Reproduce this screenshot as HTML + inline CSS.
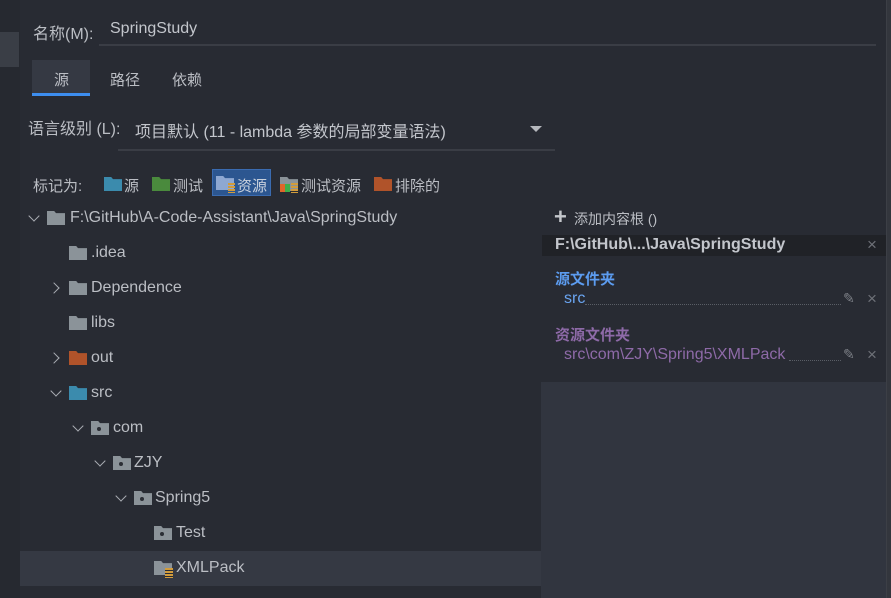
<!DOCTYPE html>
<html><head><meta charset="utf-8"><style>
body{margin:0;width:891px;height:598px;background:#282b33;overflow:hidden;position:relative;font-family:"Liberation Sans","Noto Sans CJK SC",sans-serif;font-size:16px;color:#bbbec4}
.a{position:absolute;white-space:nowrap}
.c{font-size:15px}
.f{position:absolute;width:18px;height:14px}
.chev{position:absolute;width:7px;height:7px;border-right:1.6px solid #a9adb3;border-bottom:1.6px solid #a9adb3}
.down{transform:rotate(45deg)}
.right{transform:rotate(-45deg)}
.x{position:absolute;color:#6e7178;font-size:17px}
</style></head><body>
<div class="a" style="left:0;top:0;width:20px;height:598px;background:#262930"></div>
<div class="a" style="left:0;top:32px;width:19px;height:35px;background:#3a3e46"></div>
<div class="a" style="left:886px;top:0;width:5px;height:598px;background:#33363d;border-left:1px solid #3c3f46"></div>

<div class="a" style="left:33px;top:20px">名称(M):</div>
<div class="a" style="left:110px;top:20px;color:#c3c6cc">SpringStudy</div>
<div class="a" style="left:99px;top:44px;width:777px;height:2px;background:#3a3d45"></div>

<div class="a" style="left:32px;top:60px;width:58px;height:33px;background:#353943"></div>
<div class="a" style="left:32px;top:93px;width:58px;height:3px;background:#3d8ef0"></div>
<div class="a c" style="left:54px;top:69px">源</div>
<div class="a c" style="left:110px;top:69px">路径</div>
<div class="a c" style="left:172px;top:69px">依赖</div>

<div class="a" style="left:28px;top:115px">语言级别 (L):</div>
<div class="a" style="left:135px;top:118px;color:#c3c6cc">项目默认 (11 - lambda 参数的局部变量语法)</div>
<div class="a" style="left:530px;top:126px;width:0;height:0;border-left:6px solid transparent;border-right:6px solid transparent;border-top:6px solid #b5b8bd"></div>
<div class="a" style="left:118px;top:149px;width:437px;height:2px;background:#3a3d45"></div>

<div class="a c" style="left:33px;top:175px">标记为:</div>
<div class="f" style="left:104px;top:177px;background:#3b8bad;clip-path:polygon(0 0,40% 0,50% 15%,100% 15%,100% 100%,0 100%)"></div>
<div class="a c" style="left:124px;top:175px">源</div>
<div class="f" style="left:152px;top:177px;background:#4a8a3d;clip-path:polygon(0 0,40% 0,50% 15%,100% 15%,100% 100%,0 100%)"></div>
<div class="a c" style="left:173px;top:175px">测试</div>
<div class="a" style="left:212px;top:169px;width:59px;height:27px;background:#2c5690;border:1px solid #3a6bb0;box-sizing:border-box"></div>
<div class="f" style="left:216px;top:176px;background:#8ea8d2;clip-path:polygon(0 0,40% 0,50% 15%,100% 15%,100% 100%,0 100%)"></div>
<div class="a" style="left:228px;top:183px;width:7px;height:10px;background:repeating-linear-gradient(#d29c3c 0 2px,transparent 2px 3px)"></div>
<div class="a c" style="left:237px;top:175px;color:#c8d0dc">资源</div>
<div class="f" style="left:280px;top:177px;background:#8b9399;clip-path:polygon(0 0,40% 0,50% 15%,100% 15%,100% 100%,0 100%)"></div>
<div class="a" style="left:280px;top:184px;width:10px;height:8px;background:linear-gradient(90deg,#e0662a 50%,#3fae4a 50%)"></div>
<div class="a" style="left:291px;top:183px;width:7px;height:10px;background:repeating-linear-gradient(#d29c3c 0 2px,transparent 2px 3px)"></div>
<div class="a c" style="left:301px;top:175px">测试资源</div>
<div class="f" style="left:374px;top:177px;background:#b0532a;clip-path:polygon(0 0,40% 0,50% 15%,100% 15%,100% 100%,0 100%)"></div>
<div class="a c" style="left:395px;top:175px">排除的</div>

<!-- tree -->
<div class="a" style="left:20px;top:551px;width:521px;height:35px;background:#353943"></div>
<div class="chev down" style="left:30px;top:212px"></div>
<div class="f" style="left:47px;top:211px;background:#8b9399;clip-path:polygon(0 0,40% 0,50% 15%,100% 15%,100% 100%,0 100%)"></div>
<div class="a" style="left:70px;top:209px">F:\GitHub\A-Code-Assistant\Java\SpringStudy</div>

<div class="f" style="left:69px;top:246px;background:#8b9399;clip-path:polygon(0 0,40% 0,50% 15%,100% 15%,100% 100%,0 100%)"></div>
<div class="a" style="left:91px;top:244px">.idea</div>
<div class="chev right" style="left:50px;top:284px"></div>
<div class="f" style="left:69px;top:281px;background:#8b9399;clip-path:polygon(0 0,40% 0,50% 15%,100% 15%,100% 100%,0 100%)"></div>
<div class="a" style="left:91px;top:279px">Dependence</div>
<div class="f" style="left:69px;top:316px;background:#8b9399;clip-path:polygon(0 0,40% 0,50% 15%,100% 15%,100% 100%,0 100%)"></div>
<div class="a" style="left:91px;top:314px">libs</div>
<div class="chev right" style="left:50px;top:354px"></div>
<div class="f" style="left:69px;top:351px;background:#b0532a;clip-path:polygon(0 0,40% 0,50% 15%,100% 15%,100% 100%,0 100%)"></div>
<div class="a" style="left:91px;top:349px">out</div>
<div class="chev down" style="left:52px;top:387px"></div>
<div class="f" style="left:69px;top:386px;background:#3b8bad;clip-path:polygon(0 0,40% 0,50% 15%,100% 15%,100% 100%,0 100%)"></div>
<div class="a" style="left:91px;top:384px">src</div>

<div class="chev down" style="left:74px;top:422px"></div>
<div class="f" style="left:91px;top:421px;background:#8b9399;clip-path:polygon(0 0,40% 0,50% 15%,100% 15%,100% 100%,0 100%)"><div style="position:absolute;left:6px;top:6px;width:4px;height:4px;border-radius:50%;background:#2b2e35"></div></div>
<div class="a" style="left:113px;top:419px">com</div>
<div class="chev down" style="left:96px;top:457px"></div>
<div class="f" style="left:113px;top:456px;background:#8b9399;clip-path:polygon(0 0,40% 0,50% 15%,100% 15%,100% 100%,0 100%)"><div style="position:absolute;left:6px;top:6px;width:4px;height:4px;border-radius:50%;background:#2b2e35"></div></div>
<div class="a" style="left:134px;top:454px">ZJY</div>
<div class="chev down" style="left:117px;top:492px"></div>
<div class="f" style="left:134px;top:491px;background:#8b9399;clip-path:polygon(0 0,40% 0,50% 15%,100% 15%,100% 100%,0 100%)"><div style="position:absolute;left:6px;top:6px;width:4px;height:4px;border-radius:50%;background:#2b2e35"></div></div>
<div class="a" style="left:155px;top:489px">Spring5</div>
<div class="f" style="left:154px;top:526px;background:#8b9399;clip-path:polygon(0 0,40% 0,50% 15%,100% 15%,100% 100%,0 100%)"><div style="position:absolute;left:6px;top:6px;width:4px;height:4px;border-radius:50%;background:#2b2e35"></div></div>
<div class="a" style="left:176px;top:524px">Test</div>
<div class="f" style="left:154px;top:561px;background:#8b9399;clip-path:polygon(0 0,40% 0,50% 15%,100% 15%,100% 100%,0 100%)"></div>
<div class="a" style="left:165px;top:568px;width:8px;height:10px;background:repeating-linear-gradient(#d29c3c 0 2px,#282b33 2px 3px)"></div>
<div class="a" style="left:176px;top:559px">XMLPack</div>

<!-- right panel -->
<div class="a" style="left:541px;top:382px;width:345px;height:216px;background:#31353f"></div>
<div class="a" style="left:554px;top:204px;font-size:22px;font-weight:bold;color:#c4c7cc">+</div>
<div class="a" style="left:574px;top:209px;font-size:14px">添加内容根 ()</div>
<div class="a" style="left:542px;top:235px;width:344px;height:21px;background:#202227"></div>
<div class="a" style="left:555px;top:236px;font-weight:bold;color:#c3c6cc">F:\GitHub\...\Java\SpringStudy</div>
<div class="x" style="left:867px;top:235px">×</div>
<div class="a c" style="left:555px;top:268px;font-weight:bold;color:#5c9cf0">源文件夹</div>
<div class="a" style="left:564px;top:290px;color:#6aa4f0">src</div>
<div class="a" style="left:585px;top:304px;width:256px;border-bottom:1px dotted #5a5e66"></div>
<div class="a" style="left:843px;top:290px;font-size:14px;color:#7d8087">✎</div>
<div class="x" style="left:867px;top:289px">×</div>
<div class="a c" style="left:555px;top:324px;font-weight:bold;color:#8e6aa8">资源文件夹</div>
<div class="a" style="left:564px;top:346px;color:#8e6aa8">src\com\ZJY\Spring5\XMLPack</div>
<div class="a" style="left:789px;top:360px;width:52px;border-bottom:1px dotted #5a5e66"></div>
<div class="a" style="left:843px;top:346px;font-size:14px;color:#7d8087">✎</div>
<div class="x" style="left:867px;top:345px">×</div>
</body></html>
